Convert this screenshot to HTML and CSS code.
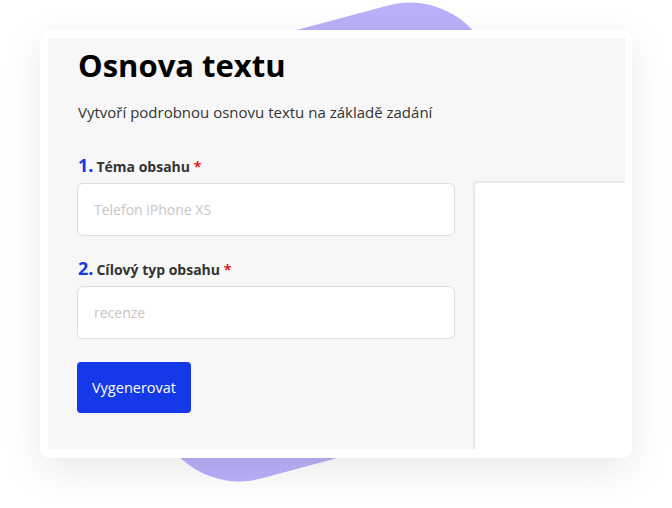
FILE: index.html
```html
<!DOCTYPE html>
<html lang="cs">
<head>
<meta charset="utf-8">
<link rel="stylesheet" href="styles.css">
</head>
<body>
<div class="stage">
  <div class="blob"></div>
  <div class="card">
    <div class="panel">
      <h1 class="title">Osnova textu</h1>
      <p class="lead">Vytvoří podrobnou osnovu textu na základě zadání</p>
      <div class="body">
        <form class="form">
          <label class="label"><span class="num">1.</span>Téma obsahu <span class="req">*</span></label>
          <div class="input"><span class="ph">Telefon iPhone XS</span></div>
          <label class="label second"><span class="num">2.</span>Cílový typ obsahu <span class="req">*</span></label>
          <div class="input"><span class="ph">recenze</span></div>
          <button type="button" class="btn">Vygenerovat</button>
        </form>
        <div class="result"></div>
      </div>
    </div>
  </div>
</div>
</body>
</html>
```
FILE: styles.css
```css
html, body {
  margin: 0;
  padding: 0;
  background: #ffffff;
}
.stage {
  position: relative;
  width: 672px;
  height: 508px;
  overflow: hidden;
  font-family: "Open Sans", "Noto Sans", sans-serif;
  padding-top: 30px;
  box-sizing: border-box;
}
.blob {
  position: absolute;
  left: 117px;
  top: 30px;
  width: 415px;
  height: 424px;
  border-radius: 85px;
  background: #b8b1fa;
  transform: rotate(-15deg);
}
.card {
  position: relative;
  margin-left: 40px;
  width: 592px;
  height: 428px;
  box-sizing: border-box;
  padding: 8px 7px 9px 8px;
  background: #ffffff;
  border-radius: 10px;
  box-shadow: 0 12px 40px rgba(0, 0, 0, 0.09);
}
.panel {
  height: 100%;
  background: #f7f7f7;
  overflow: hidden;
  padding: 9px 0 0 29px;
  box-sizing: border-box;
}
.title {
  margin: 0 0 0 1px;
  font-size: 31px;
  line-height: 36px;
  font-weight: 700;
  color: #000;
}
.lead {
  margin: 18px 0 0 1px;
  font-size: 15px;
  line-height: 22px;
  color: #333;
}
.body {
  display: flex;
  align-items: flex-start;
  gap: 18px;
  margin-top: 31px;
  height: 400px;
}
.form {
  width: 378px;
  flex: none;
  display: flex;
  flex-direction: column;
  align-items: flex-start;
  margin: 0;
}
.label {
  font-size: 14px;
  font-weight: 700;
  color: #333;
  line-height: 22px;
  margin-bottom: 5px;
  margin-left: 1px;
}
.label.second {
  margin-top: 21px;
}
.num {
  color: #1538e6;
  font-size: 18px;
  margin-right: 3px;
}
.req {
  color: #e31d1d;
}
.input {
  width: 378px;
  height: 53px;
  box-sizing: border-box;
  background: #fff;
  border: 1px solid #dedede;
  border-radius: 6px;
  padding: 0 16px;
  display: flex;
  align-items: center;
}
.ph {
  font-size: 14px;
  color: #c6c6c6;
}
.btn {
  margin-top: 23px;
  width: 114px;
  height: 51px;
  background: #1539e8;
  border: none;
  border-radius: 4px;
  color: #fff;
  font-family: inherit;
  font-size: 14.5px;
  padding: 0;
}
.result {
  flex: none;
  margin-top: 27px;
  width: 300px;
  height: 300px;
  background: #fff;
  border-top: 2px solid #e9e9e9;
  border-left: 2px solid #e9e9e9;
  border-top-left-radius: 5px;
  box-sizing: border-box;
}
```
